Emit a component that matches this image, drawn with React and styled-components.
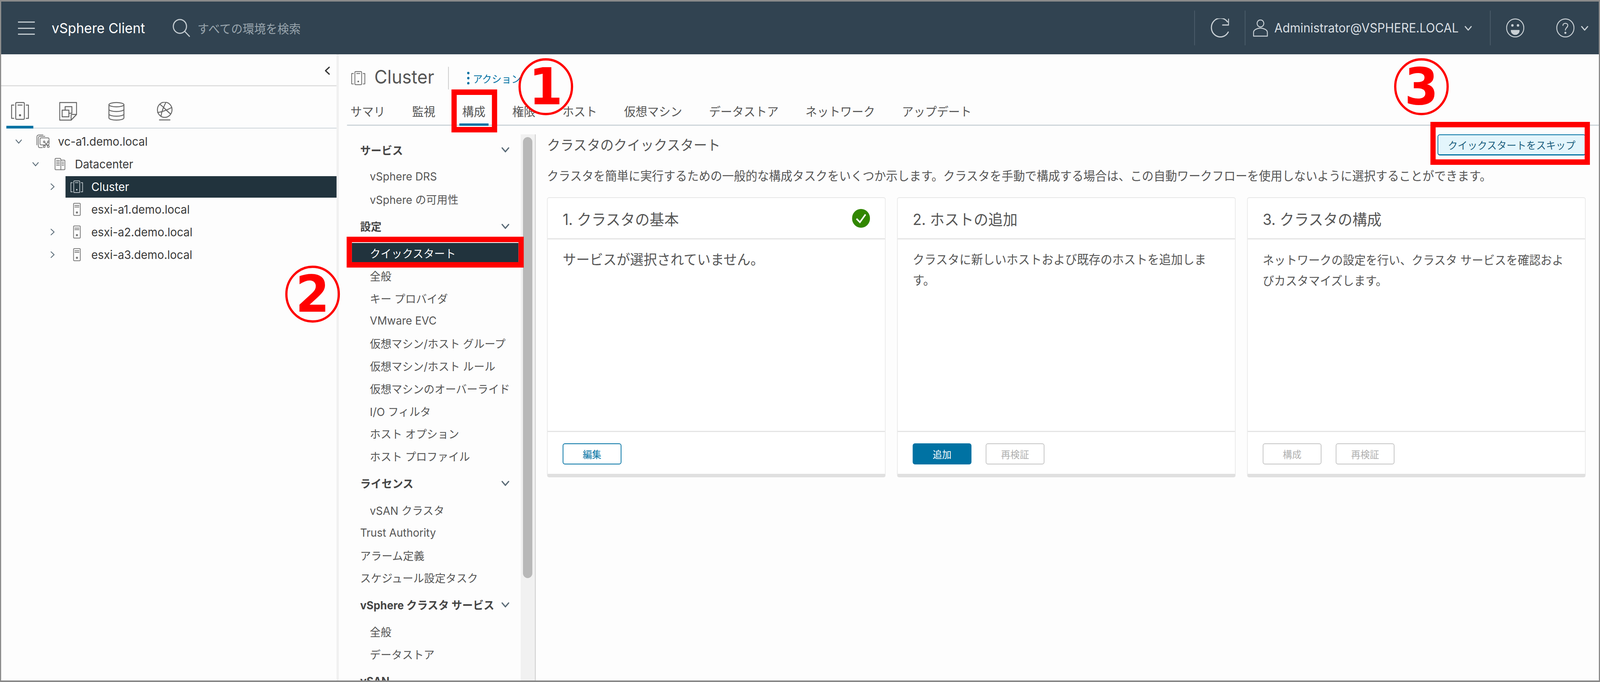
import React from "react";
import styled, { createGlobalStyle } from "styled-components";

const DESIGN_WIDTH = 4274;

const GlobalStyle = createGlobalStyle`
  html, body {
    margin: 0;
    padding: 0;
    background: #fff;
    overflow: hidden;
  }
  * {
    box-sizing: border-box;
  }
`;

const Page = styled.div`
  position: relative;
  width: ${DESIGN_WIDTH}px;
  height: 1746px;
  display: flex;
  flex-direction: column;
  overflow: hidden;
  transform-origin: 0 0;
  border-style: solid;
  border-color: #8a8a8a;
  border-width: 4px 3px;
  background: #fdfdfd;
  color: #565656;
  font-family: Inter, "Noto Sans CJK JP", sans-serif;
`;

const Header = styled.header`
  flex: none;
  height: 135px;
  display: flex;
  align-items: center;
  padding-left: 45px;
  background: #314351;
  color: #fff;
`;

const Burger = styled.div`
  width: 45px;
  height: 34px;
  border-top: 3px solid #c3cbd0;
  border-bottom: 3px solid #c3cbd0;
  position: relative;
  &::after {
    content: "";
    position: absolute;
    left: 0;
    right: 0;
    top: 13px;
    height: 3px;
    background: #c3cbd0;
  }
`;

const Brand = styled.div`
  margin-left: 45px;
  margin-right: 73px;
  font-size: 36px;
  line-height: 1;
  white-space: nowrap;
`;

const SearchHint = styled.div`
  margin-left: 20px;
  font-size: 31px;
  color: #99a5ad;
  white-space: nowrap;
`;

const HeaderRight = styled.div`
  margin-left: auto;
  display: flex;
  align-items: center;
  height: 89px;
`;

const HeaderCell = styled.div`
  height: 100%;
  width: ${(p) => p.$width}px;
  display: flex;
  align-items: center;
  justify-content: ${(p) => (p.$center ? "center" : "flex-start")};
  padding-left: ${(p) => p.$pad || 0}px;
  border-left: 2px solid #4c5d6a;
  color: #c9d0d5;
`;

const UserName = styled.span`
  margin-left: 17px;
  margin-right: 15px;
  font-size: 32px;
  color: #d9dfe3;
  white-space: nowrap;
`;

const HelpIcon = styled.span`
  display: flex;
  align-items: center;
  gap: 16px;
  margin-left: 85px;
`;

const Body = styled.div`
  flex: 1;
  min-height: 0;
  display: flex;
`;

const Sidebar = styled.aside`
  flex: none;
  width: 902px;
  border-right: 6px solid #f0f0f0;
`;

const CollapseBar = styled.div`
  height: 82px;
  display: flex;
  justify-content: flex-end;
  padding: 30px 12px 0 0;
  border-bottom: 3px solid #dfdfdf;
  color: #333;
`;

const IconTabs = styled.div`
  margin-left: 14px;
  height: 108px;
  display: flex;
  gap: 57px;
  border-bottom: 2px solid #cdd5da;
`;

const IconTab = styled.div`
  width: 72px;
  height: 108px;
  display: flex;
  justify-content: center;
  padding-top: 40px;
  color: #666;
  border-bottom: ${(p) => (p.$active ? "7px solid #0072a3" : "none")};
`;

const Tree = styled.div`
  padding-top: 4px;
`;

const TreeRow = styled.div`
  height: 58px;
  display: flex;
  align-items: center;
  padding-left: ${(p) => 35 + p.$depth * 45}px;
`;

const ArrowSlot = styled.div`
  flex: none;
  width: 24px;
  display: flex;
  justify-content: center;
  color: #5a6b77;
`;

const TreeNode = styled.div`
  flex: 1;
  height: 55px;
  display: flex;
  align-items: center;
  margin-left: ${(p) => [35, 38, 23][p.$depth]}px;
  padding-left: ${(p) => (p.$depth === 2 ? 12 : 0)}px;
  gap: ${(p) => (p.$depth === 1 ? 25 : 21)}px;
  font-size: 30px;
  color: ${(p) => (p.$selected ? "#fff" : "#3a3a3a")};
  background: ${(p) => (p.$selected ? "#21333d" : "transparent")};
`;

const NodeIcon = styled.div`
  flex: none;
  width: ${(p) => (p.$depth === 2 ? "36px" : "auto")};
  display: flex;
  justify-content: center;
  color: ${(p) => (p.$selected ? "#c9d0d5" : "#777")};
`;

const Main = styled.main`
  flex: 1;
  min-width: 0;
  display: flex;
  flex-direction: column;
`;

const TitleRow = styled.div`
  flex: none;
  height: 100px;
  display: flex;
  align-items: center;
  padding: 22px 0 0 31px;
  color: #666;
`;

const ObjectName = styled.h1`
  margin: 0 0 6px 22px;
  font-size: 47.5px;
  font-weight: 400;
  line-height: 1;
  color: #565656;
`;

const ActionBar = styled.div`
  margin-left: 37px;
  padding-left: 49px;
  height: 58px;
  display: flex;
  align-items: center;
  gap: 9px;
  border-left: 2px solid #ccc;
  font-size: 26px;
  color: #0072a3;
  white-space: nowrap;
`;

const TabBar = styled.nav`
  flex: none;
  height: 83px;
  margin-left: 22px;
  padding-left: 1px;
  display: flex;
  gap: 55.8px;
  border-bottom: 3px solid #cdd5da;
`;

const Tab = styled.div`
  height: 83px;
  padding: 11px 8px 0;
  display: flex;
  align-items: center;
  font-size: 31px;
  white-space: nowrap;
  color: #565656;
  border-bottom: 6px solid ${(p) => (p.$active ? "#0072a3" : "transparent")};
`;

const Split = styled.div`
  flex: 1;
  min-height: 0;
  display: flex;
`;

const ConfigNav = styled.div`
  flex: none;
  width: 486px;
  padding: 21px 6px 0 35px;
  overflow: hidden;
`;

const NavHead = styled.div`
  height: 58px;
  margin: 11px 0;
  padding: 0 23px 0 22px;
  display: flex;
  align-items: center;
  justify-content: space-between;
  font-size: 28.6px;
  font-weight: 700;
  color: #454545;
  white-space: nowrap;
`;

const NavItem = styled.div`
  height: 57.8px;
  display: flex;
  align-items: center;
`;

const NavLabel = styled.div`
  flex: 1;
  height: 51px;
  display: flex;
  align-items: center;
  padding-left: ${(p) => (p.$top ? 22 : 48)}px;
  font-size: 28.8px;
  white-space: nowrap;
  color: ${(p) => (p.$active ? "#fff" : "#565656")};
  background: ${(p) => (p.$active ? "#21333d" : "transparent")};
`;

const ScrollTrack = styled.div`
  flex: none;
  width: 40px;
  margin-top: 22px;
  padding: 7px 7px 0 6px;
  background: #f1f1f1;
  border-right: 2px solid #cbcbcb;
`;

const ScrollThumb = styled.div`
  height: 1129px;
  border-radius: 13px;
  background: #b8b8b8;
`;

const Content = styled.section`
  flex: 1;
  min-width: 0;
  padding: 22px 35px 0 30px;
`;

const ContentHead = styled.div`
  height: 54px;
  display: flex;
  align-items: center;
  justify-content: space-between;
`;

const ContentTitle = styled.h2`
  margin: 0 0 4px;
  font-size: 35.8px;
  font-weight: 400;
  color: #565656;
`;

const SkipButton = styled.button`
  width: 396px;
  height: 54px;
  padding: 0;
  border: 2px solid #0072a3;
  border-bottom-width: 3px;
  border-radius: 6px;
  background: #e3f5fc;
  color: #1c5f7e;
  font-family: inherit;
  font-size: 26.3px;
`;

const Description = styled.p`
  margin: 30px 0 31px;
  font-size: 31.25px;
  line-height: 46px;
  white-space: nowrap;
  color: #565656;
`;

const Cards = styled.div`
  display: flex;
  gap: 30px;
`;

const Card = styled.article`
  flex: 1;
  height: 717px;
  display: flex;
  flex-direction: column;
  background: #fff;
  border: 2px solid #e6e6e6;
  border-bottom: 9px solid #e0e0e0;
  border-radius: 6px;
`;

const CardHead = styled.div`
  flex: none;
  height: 106px;
  padding: 0 40px;
  display: flex;
  align-items: center;
  justify-content: space-between;
  border-bottom: 3px solid #e4e4e4;
`;

const CardTitle = styled.h3`
  margin: 0;
  font-size: 39px;
  font-weight: 400;
  color: #565656;
`;

const CardText = styled.div`
  flex: 1;
  padding: 26px 40px 0;
  font-size: ${(p) => p.$size}px;
  line-height: 53px;
  color: #565656;
`;

const CardFoot = styled.div`
  flex: none;
  height: 110px;
  padding: 4px 40px 0;
  display: flex;
  align-items: center;
  gap: 38px;
  border-top: 3px solid #e4e4e4;
`;

const buttonTones = {
  outline: "color: #0072a3; background: #fff; border-color: #0072a3;",
  primary: "color: #fff; background: #0072a3; border-color: #0072a3;",
  disabled: "color: #b0b0b0; background: #fff; border-color: #c4c4c4;",
};

const CardButton = styled.button`
  width: 157px;
  height: 54px;
  padding: 0;
  border: 2px solid;
  border-radius: 6px;
  font-family: inherit;
  font-size: 25px;
  ${(p) => buttonTones[p.$tone]}
`;

// the red call-outs drawn on top of the screenshot
const CallBox = styled.div`
  position: absolute;
  left: ${(p) => p.$x - 3}px;
  top: ${(p) => p.$y - 4}px;
  width: ${(p) => p.$w}px;
  height: ${(p) => p.$h}px;
  border: 14px solid #ff0000;
`;

const CallRing = styled.div`
  position: absolute;
  left: ${(p) => p.$x - 3}px;
  top: ${(p) => p.$y - 4}px;
  width: 146px;
  height: 146px;
  display: flex;
  align-items: center;
  justify-content: center;
  border: 6px solid #ff0000;
  border-radius: 50%;
  background: ${(p) => (p.$filled ? "#fdfdfd" : "transparent")};
  color: #ff0000;
  font-family: "DejaVu Sans", sans-serif;
  font-size: 130px;
  font-weight: 700;
  line-height: 1;
`;

const Svg = styled.svg`
  flex: none;
  display: block;
  fill: none;
  stroke: currentColor;
  stroke-width: ${(p) => p.$stroke || 2.5};
  stroke-linecap: round;
  stroke-linejoin: round;
`;

const SearchGlyph = styled(Svg)`
  color: #c3cbd0;
`;

const Chevron = ({ dir = "down", size = 22, stroke = 3 }) => {
  const points = {
    down: "3,7 11,16 19,7",
    right: "7,3 16,11 7,19",
    left: "15,3 6,11 15,19",
  }[dir];
  return (
    <Svg width={size} height={size} viewBox="0 0 22 22" $stroke={stroke}>
      <polyline points={points} />
    </Svg>
  );
};

const NavChevron = styled.span`
  display: flex;
  color: #5a6b77;
`;

const ClusterIcon = ({ w = 49, h = 46 }) => (
  <Svg width={w} height={h} viewBox="0 0 49 46">
    <rect x="13" y="1.5" width="23" height="43" rx="2.5" />
    <line x1="19" y1="8" x2="30" y2="8" />
    <circle cx="24.5" cy="34" r="1.6" fill="currentColor" />
    <path d="M8 8H2V42H8" />
    <path d="M41 8H47V42H41" />
  </Svg>
);

const VmsIcon = () => (
  <Svg width="48" height="48" viewBox="0 0 48 48">
    <path d="M1.5 1.5H46.5V32L32 46.5H1.5Z" />
    <path d="M46 32H34Q32 32 32 34V46" />
    <rect x="8" y="21" width="18" height="17" />
    <path d="M16 21V12H34V29H26" />
  </Svg>
);

const StorageIcon = () => (
  <Svg width="44" height="48" viewBox="0 0 44 48">
    <ellipse cx="22" cy="7" rx="20" ry="5.5" />
    <path d="M2 7V41C2 44 11 46.5 22 46.5S42 44 42 41V7" />
    <path d="M2 19C2 22 11 24.5 22 24.5S42 22 42 19" />
    <path d="M2 31C2 34 11 36.5 22 36.5S42 34 42 31" />
  </Svg>
);

const NetworkIcon = () => (
  <Svg width="44" height="48" viewBox="0 0 44 48">
    <circle cx="22" cy="20" r="19.5" />
    <path d="M9 6C16 10 26 22 38 31" />
    <path d="M3 27C14 26 30 20 41 14" />
    <path d="M25 1C22 8 14 20 12 37" />
    <line x1="8" y1="46" x2="36" y2="46" />
  </Svg>
);

const VCenterIcon = () => (
  <Svg width="37" height="36" viewBox="0 0 37 36" $stroke={2}>
    <path d="M18 1.5H7Q1.5 1.5 1.5 7V27" />
    <path d="M23 5H10Q5.5 5 5.5 10V30Q5.5 34 10 34H16" />
    <rect x="10" y="9" width="24" height="18" rx="3" />
    <path d="M21 19L32 31M32 19L21 31" />
    <circle cx="21" cy="19" r="2" fill="#fdfdfd" />
    <circle cx="32" cy="19" r="2" fill="#fdfdfd" />
    <circle cx="21" cy="31" r="2.5" fill="#fdfdfd" />
    <circle cx="32" cy="31" r="2.5" fill="#fdfdfd" />
  </Svg>
);

const DatacenterIcon = () => (
  <Svg width="30" height="32" viewBox="0 0 30 32" $stroke={2}>
    <path d="M2 4Q2 1.5 4.5 1.5H15Q17.5 1.5 17.5 4V30.5H4Q2 30.5 2 28.5Z" />
    <path d="M17.5 6H26Q28.5 6 28.5 8V28.5Q28.5 30.5 26 30.5H17.5" />
    <path d="M6 7H14M6 11H14M6 15H14M6 19H14M21 11H25M21 15H25M21 19H25" strokeDasharray="1.6 1.6" />
  </Svg>
);

const HostIcon = () => (
  <Svg width="21" height="34" viewBox="0 0 21 34" $stroke={2}>
    <rect x="1.5" y="1.5" width="18" height="31" rx="2" />
    <line x1="5" y1="7" x2="16" y2="7" />
    <line x1="5" y1="11" x2="16" y2="11" />
    <circle cx="10.5" cy="25" r="1.8" fill="currentColor" />
  </Svg>
);

const treeIcons = {
  vc: <VCenterIcon />,
  dc: <DatacenterIcon />,
  cluster: <ClusterIcon w={36} h={32} />,
  host: <HostIcon />,
};

const treeRows = [
  { depth: 0, arrow: "down", icon: "vc", label: "vc-a1.demo.local" },
  { depth: 1, arrow: "down", icon: "dc", label: "Datacenter" },
  { depth: 2, arrow: "right", icon: "cluster", label: "Cluster", selected: true },
  { depth: 2, icon: "host", label: "esxi-a1.demo.local" },
  { depth: 2, arrow: "right", icon: "host", label: "esxi-a2.demo.local" },
  { depth: 2, arrow: "right", icon: "host", label: "esxi-a3.demo.local" },
];

const tabs = ["サマリ", "監視", "構成", "権限", "ホスト", "仮想マシン", "データストア", "ネットワーク", "アップデート"];

const navEntries = [
  { head: "サービス" },
  { label: "vSphere DRS" },
  { label: "vSphere の可用性" },
  { head: "設定" },
  { label: "クイックスタート", active: true },
  { label: "全般" },
  { label: "キー プロバイダ" },
  { label: "VMware EVC" },
  { label: "仮想マシン/ホスト グループ" },
  { label: "仮想マシン/ホスト ルール" },
  { label: "仮想マシンのオーバーライド" },
  { label: "I/O フィルタ" },
  { label: "ホスト オプション" },
  { label: "ホスト プロファイル" },
  { head: "ライセンス" },
  { label: "vSAN クラスタ" },
  { label: "Trust Authority", top: true },
  { label: "アラーム定義", top: true },
  { label: "スケジュール設定タスク", top: true },
  { head: "vSphere クラスタ サービス" },
  { label: "全般" },
  { label: "データストア" },
  { head: "vSAN", plain: true },
];

const cards = [
  {
    title: "1. クラスタの基本",
    done: true,
    size: 36,
    text: "サービスが選択されていません。",
    buttons: [["編集", "outline"]],
  },
  {
    title: "2. ホストの追加",
    size: 31.4,
    text: "クラスタに新しいホストおよび既存のホストを追加します。",
    buttons: [["追加", "primary"], ["再検証", "disabled"]],
  },
  {
    title: "3. クラスタの構成",
    size: 30.6,
    text: "ネットワークの設定を行い、クラスタ サービスを確認およびカスタマイズします。",
    buttons: [["構成", "disabled"], ["再検証", "disabled"]],
  },
];

export default function App() {
  // the browser may cap its window below the design width, so fit the page to what it really has
  const fit = Math.min(1, window.innerWidth / DESIGN_WIDTH);

  return (
    <>
      <GlobalStyle />
      <Page style={{ transform: `scaleX(${fit})` }}>
        <Header>
          <Burger />
          <Brand>vSphere Client</Brand>
          <SearchGlyph width="47" height="47" viewBox="0 0 48 48" $stroke={3}>
            <circle cx="20" cy="20" r="18" />
            <line x1="33" y1="33" x2="46" y2="46" />
          </SearchGlyph>
          <SearchHint>すべての環境を検索</SearchHint>
          <HeaderRight>
            <HeaderCell $width={135} $center>
              <Svg width="49" height="50" viewBox="0 0 49 50" $stroke={3}>
                <path d="M45 9A24 24 0 1 0 47 35" />
                <path d="M32 17H48V2" />
              </Svg>
            </HeaderCell>
            <HeaderCell $width={655} $pad={20}>
              <Svg width="40" height="44" viewBox="0 0 40 44">
                <circle cx="20" cy="10" r="9" />
                <path d="M1.5 42.5V33C1.5 26 12 22 20 22S38.5 26 38.5 33V42.5Z" />
              </Svg>
              <UserName>Administrator@VSPHERE.LOCAL</UserName>
              <Chevron />
            </HeaderCell>
            <HeaderCell $width={291} $pad={41}>
              <Svg width="49" height="49" viewBox="0 0 49 49">
                <circle cx="24.5" cy="24.5" r="23" />
                <circle cx="17" cy="18" r="2" fill="currentColor" />
                <circle cx="32" cy="18" r="2" fill="currentColor" />
                <path d="M14 31H35C35 37 30 41 24.5 41S14 37 14 31Z" fill="currentColor" />
              </Svg>
              <HelpIcon>
                <Svg width="49" height="49" viewBox="0 0 49 49">
                  <circle cx="24.5" cy="24.5" r="23" />
                  <path d="M18 18C18 11 31 11 31 18C31 24 24.5 24 24.5 30" />
                  <circle cx="24.5" cy="37" r="1.5" fill="currentColor" />
                </Svg>
                <Chevron />
              </HelpIcon>
            </HeaderCell>
          </HeaderRight>
        </Header>

        <Body>
          <Sidebar>
            <CollapseBar>
              <Chevron dir="left" size={24} />
            </CollapseBar>
            <IconTabs>
              <IconTab $active>
                <ClusterIcon />
              </IconTab>
              <IconTab>
                <VmsIcon />
              </IconTab>
              <IconTab>
                <StorageIcon />
              </IconTab>
              <IconTab>
                <NetworkIcon />
              </IconTab>
            </IconTabs>
            <Tree>
              {treeRows.map((row) => (
                <TreeRow key={row.label} $depth={row.depth}>
                  <ArrowSlot>{row.arrow && <Chevron dir={row.arrow} size={20} stroke={2.5} />}</ArrowSlot>
                  <TreeNode $depth={row.depth} $selected={row.selected}>
                    <NodeIcon $depth={row.depth} $selected={row.selected}>
                      {treeIcons[row.icon]}
                    </NodeIcon>
                    {row.label}
                  </TreeNode>
                </TreeRow>
              ))}
            </Tree>
          </Sidebar>

          <Main>
            <TitleRow>
              <ClusterIcon w={42} h={36} />
              <ObjectName>Cluster</ObjectName>
              <ActionBar>
                <Svg width="6" height="32" viewBox="0 0 6 32">
                  <circle cx="3" cy="3" r="2" fill="currentColor" />
                  <circle cx="3" cy="16" r="2" fill="currentColor" />
                  <circle cx="3" cy="29" r="2" fill="currentColor" />
                </Svg>
                アクション
              </ActionBar>
            </TitleRow>
            <TabBar>
              {tabs.map((tab) => (
                <Tab key={tab} $active={tab === "構成"}>
                  {tab}
                </Tab>
              ))}
            </TabBar>
            <Split>
              <ConfigNav>
                {navEntries.map((entry, i) =>
                  entry.head ? (
                    <NavHead key={i}>
                      {entry.head}
                      {!entry.plain && (
                        <NavChevron>
                          <Chevron size={24} />
                        </NavChevron>
                      )}
                    </NavHead>
                  ) : (
                    <NavItem key={i}>
                      <NavLabel $top={entry.top} $active={entry.active}>
                        {entry.label}
                      </NavLabel>
                    </NavItem>
                  )
                )}
              </ConfigNav>
              <ScrollTrack>
                <ScrollThumb />
              </ScrollTrack>
              <Content>
                <ContentHead>
                  <ContentTitle>クラスタのクイックスタート</ContentTitle>
                  <SkipButton>クイックスタートをスキップ</SkipButton>
                </ContentHead>
                <Description>
                  クラスタを簡単に実行するための一般的な構成タスクをいくつか示します。クラスタを手動で構成する場合は、この自動ワークフローを使用しないように選択することができます。
                </Description>
                <Cards>
                  {cards.map((card) => (
                    <Card key={card.title}>
                      <CardHead>
                        <CardTitle>{card.title}</CardTitle>
                        {card.done && (
                          <svg width="48" height="48" viewBox="0 0 48 48">
                            <circle cx="24" cy="24" r="24" fill="#318700" />
                            <polyline
                              points="12,25 21,34 36,14"
                              fill="none"
                              stroke="#fff"
                              strokeWidth="4"
                            />
                          </svg>
                        )}
                      </CardHead>
                      <CardText $size={card.size}>{card.text}</CardText>
                      <CardFoot>
                        {card.buttons.map(([label, tone]) => (
                          <CardButton key={label} $tone={tone}>
                            {label}
                          </CardButton>
                        ))}
                      </CardFoot>
                    </Card>
                  ))}
                </Cards>
              </Content>
            </Split>
          </Main>
        </Body>

        <CallBox $x={1206} $y={229} $w={122} $h={110} />
        <CallBox $x={926} $y={606} $w={473} $h={79} />
        <CallBox $x={3821} $y={312} $w={426} $h={110} />
        <CallRing $x={1385} $y={149} $filled>1</CallRing>
        <CallRing $x={762} $y={680}>2</CallRing>
        <CallRing $x={3724} $y={149}>3</CallRing>
      </Page>
    </>
  );
}
